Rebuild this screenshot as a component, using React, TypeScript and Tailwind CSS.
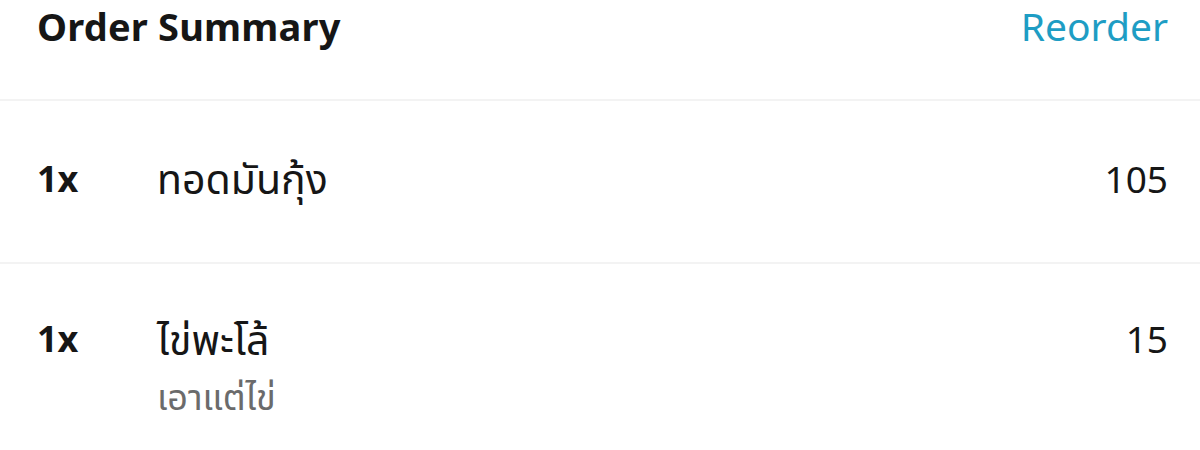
const items = [
  { qty: 1, name: 'ทอดมันกุ้ง', price: 105 },
  { qty: 1, name: 'ไข่พะโล้', note: 'เอาแต่ไข่', price: 15 },
];

export default function App() {
  return (
    <div
      className="w-[1200px] h-[450px] overflow-hidden bg-white text-[#161616]"
      style={{ fontFamily: '"Noto Sans", "Noto Sans Thai", "DejaVu Sans", sans-serif' }}
    >
      <div className="flex items-start justify-between pl-[37px] pr-[32px] h-[101px] border-b-2 border-[#f3f3f3]">
        <h2 className="text-[38px] leading-[52px] font-bold tracking-[0.2px]">Order Summary</h2>
        <button className="text-[39px] leading-[52px] text-[#1e9dc4]">Reorder</button>
      </div>

      <div className="flex items-center h-[163px] pl-[37px] pr-[32px] pb-[6px] border-b-2 border-[#f3f3f3]">
        <span className="w-[120px] text-[36px] font-bold">{items[0].qty}x</span>
        <span className="flex-1 text-[41px]">{items[0].name}</span>
        <span className="text-[37px]">{items[0].price}</span>
      </div>

      <div className="flex items-start pl-[37px] pr-[32px] pt-[46px]">
        <span className="w-[120px] text-[36px] leading-[58px] font-bold">{items[1].qty}x</span>
        <div className="flex-1 flex flex-col">
          <span className="text-[41px] leading-[58px]">{items[1].name}</span>
          <span className="text-[36px] leading-[58px] text-[#6b6b6b]">{items[1].note}</span>
        </div>
        <span className="text-[37px] leading-[58px]">{items[1].price}</span>
      </div>
    </div>
  );
}
